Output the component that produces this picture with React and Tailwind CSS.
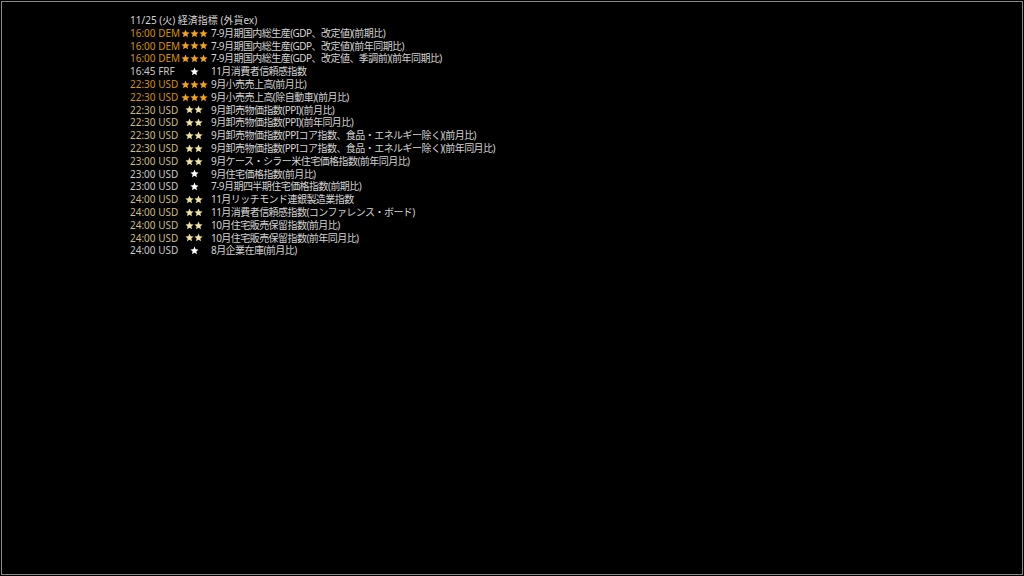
const rows = [
  ['16:00 DEM', 3, '7-9月期国内総生産(GDP、改定値)(前期比)'],
  ['16:00 DEM', 3, '7-9月期国内総生産(GDP、改定値)(前年同期比)'],
  ['16:00 DEM', 3, '7-9月期国内総生産(GDP、改定値、季調前)(前年同期比)'],
  ['16:45 FRF', 1, '11月消費者信頼感指数'],
  ['22:30 USD', 3, '9月小売売上高(前月比)'],
  ['22:30 USD', 3, '9月小売売上高(除自動車)(前月比)'],
  ['22:30 USD', 2, '9月卸売物価指数(PPI)(前月比)'],
  ['22:30 USD', 2, '9月卸売物価指数(PPI)(前年同月比)'],
  ['22:30 USD', 2, '9月卸売物価指数(PPIコア指数、食品・エネルギー除く)(前月比)'],
  ['22:30 USD', 2, '9月卸売物価指数(PPIコア指数、食品・エネルギー除く)(前年同月比)'],
  ['23:00 USD', 2, '9月ケース・シラー米住宅価格指数(前年同月比)'],
  ['23:00 USD', 1, '9月住宅価格指数(前月比)'],
  ['23:00 USD', 1, '7-9月期四半期住宅価格指数(前期比)'],
  ['24:00 USD', 2, '11月リッチモンド連銀製造業指数'],
  ['24:00 USD', 2, '11月消費者信頼感指数(コンファレンス・ボード)'],
  ['24:00 USD', 2, '10月住宅販売保留指数(前月比)'],
  ['24:00 USD', 2, '10月住宅販売保留指数(前年同月比)'],
  ['24:00 USD', 1, '8月企業在庫(前月比)'],
];

const timeColor = { 3: 'text-[#d4900e]', 2: 'text-[#c9bd82]', 1: 'text-[#c8c8c8]' };
const starColor = { 3: 'text-[#f2a21c]', 2: 'text-[#eee3a2]', 1: 'text-white' };

const Star = () => (
  <svg width="9" height="9" viewBox="0 0 24 24" fill="currentColor">
    <path d="M12 1.5l3.1 7.1 7.7.7-5.8 5.1 1.7 7.6L12 18l-6.7 4 1.7-7.6-5.8-5.1 7.7-.7z" />
  </svg>
);

const App = () => {
  return (
    <div className="w-[1024px] h-[576px] bg-black p-px">
      <div
        className="w-full h-full border border-[#8a8a8a] bg-black pl-[128px] pt-[12px] text-[10px] leading-[12.8px] text-[#d4d4d4]"
        style={{ fontFamily: '"Noto Sans", "Noto Sans CJK JP", sans-serif' }}
      >
        <div>11/25 (火) 経済指標 (外貨ex)</div>
        {rows.map(([time, stars, label], i) => (
          <div key={i} className="flex items-center whitespace-nowrap">
            <span className={`w-[50px] ${timeColor[stars]}`}>{time}</span>
            <span className={`w-[28px] flex justify-center ${starColor[stars]}`}>
              {Array.from({ length: stars }).map((_, j) => (
                <Star key={j} />
              ))}
            </span>
            <span className="pl-[3px] tracking-[-0.55px]">{label}</span>
          </div>
        ))}
      </div>
    </div>
  );
};

export default App;
